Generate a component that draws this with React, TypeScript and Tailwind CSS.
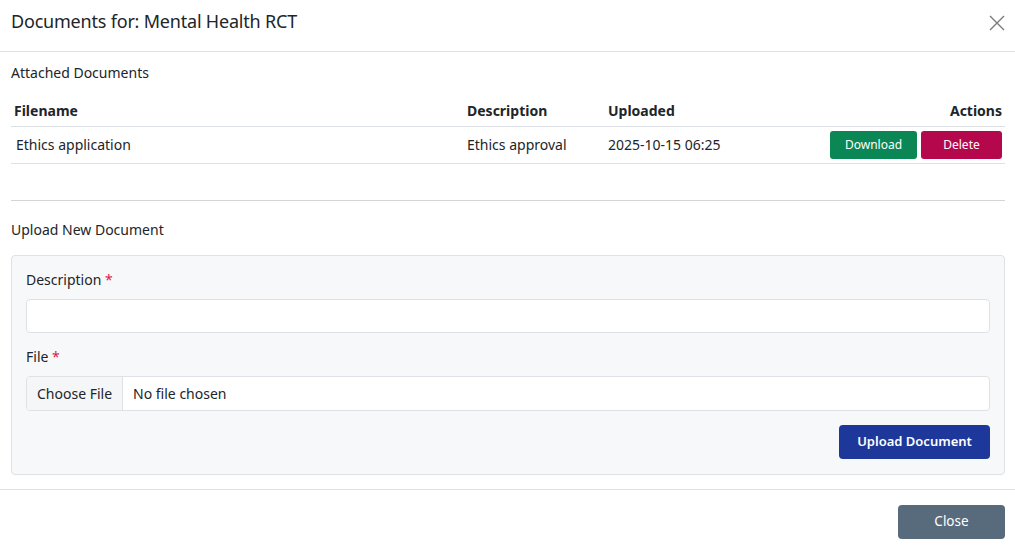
const font = { fontFamily: '"Noto Sans", "Open Sans", sans-serif' };

export default function App() {
  return (
    <div className="w-[1015px] h-[549px] bg-white text-[#212529] overflow-hidden" style={font}>
      {/* header */}
      <div className="flex items-start justify-between h-[52px] pl-[11px] pr-[10px] pt-[10px] border-b border-[#dee2e6]">
        <h1 className="text-[18px] leading-[22px] tracking-[-0.2px]">Documents for: Mental Health RCT</h1>
        <button className="text-[#7a7a7a] mt-[5px]">
          <svg width="16" height="16" viewBox="0 0 16 16" stroke="currentColor" strokeWidth="1.4" fill="none">
            <path d="M1 1L15 15M15 1L1 15" />
          </svg>
        </button>
      </div>

      {/* body */}
      <div className="pl-[11px] pr-[10px] pt-[11px] pb-[14px] text-[14px]">
        <div className="leading-5 text-[14px]">Attached Documents</div>
        <table className="w-full mt-[10px] border-collapse text-[14px]">
          <thead>
            <tr className="border-b border-[#dee2e6] h-[33px]">
              <th className="text-left font-bold px-[3px] pt-[3px] w-[453px]">Filename</th>
              <th className="text-left font-bold px-[3px] pt-[3px] w-[141px]">Description</th>
              <th className="text-left font-bold px-[3px] pt-[3px]">Uploaded</th>
              <th className="text-right font-bold px-[3px] pt-[3px]">Actions</th>
            </tr>
          </thead>
          <tbody>
            <tr className="border-b border-[#dee2e6] h-[37px]">
              <td className="px-[5px]">Ethics application</td>
              <td className="px-[3px]">Ethics approval</td>
              <td className="px-[3px]">2025-10-15 06:25</td>
              <td className="px-[3px]">
                <div className="flex justify-end gap-[4px]">
                  <button className="h-[28px] w-[87px] rounded-[3px] bg-[#0b8655] text-white text-[12px]">Download</button>
                  <button className="h-[28px] w-[81px] rounded-[3px] bg-[#b5084c] text-white text-[12px]">Delete</button>
                </div>
              </td>
            </tr>
          </tbody>
        </table>

        <div className="mt-[36px] border-t border-[#d3d6d9]" />

        <div className="mt-[19px] leading-5 text-[14px]">Upload New Document</div>

        <div className="mt-[15px] bg-[#f7f8fa] border border-[#dee2e6] rounded-[4px] px-[14px] pt-[14px] pb-[15px]">
          <label className="block leading-5 text-[14px]">
            Description <span className="text-[#dc1a4a]">*</span>
          </label>
          <input className="mt-[9px] block w-full h-[34px] bg-white border border-[#dee2e6] rounded-[4px]" />

          <label className="block mt-[14px] leading-5 text-[14px]">
            File <span className="text-[#dc1a4a]">*</span>
          </label>
          <div className="mt-[9px] flex h-[35px] bg-white border border-[#dee2e6] rounded-[4px] overflow-hidden text-[14px]">
            <div className="flex items-center px-[10px] bg-[#f5f6f7] border-r border-[#dee2e6]">Choose File</div>
            <div className="flex items-center px-[10px]">No file chosen</div>
          </div>

          <div className="flex justify-end mt-[14px]">
            <button className="h-[34px] w-[151px] rounded-[4px] bg-[#1e379a] text-white text-[13px] font-semibold">
              Upload Document
            </button>
          </div>
        </div>
      </div>

      {/* footer */}
      <div className="flex justify-end border-t border-[#dee2e6] px-[10px] pt-[15px]">
        <button className="h-[34px] w-[107px] rounded-[4px] bg-[#586b7d] text-white text-[13.5px]">Close</button>
      </div>
    </div>
  );
}
